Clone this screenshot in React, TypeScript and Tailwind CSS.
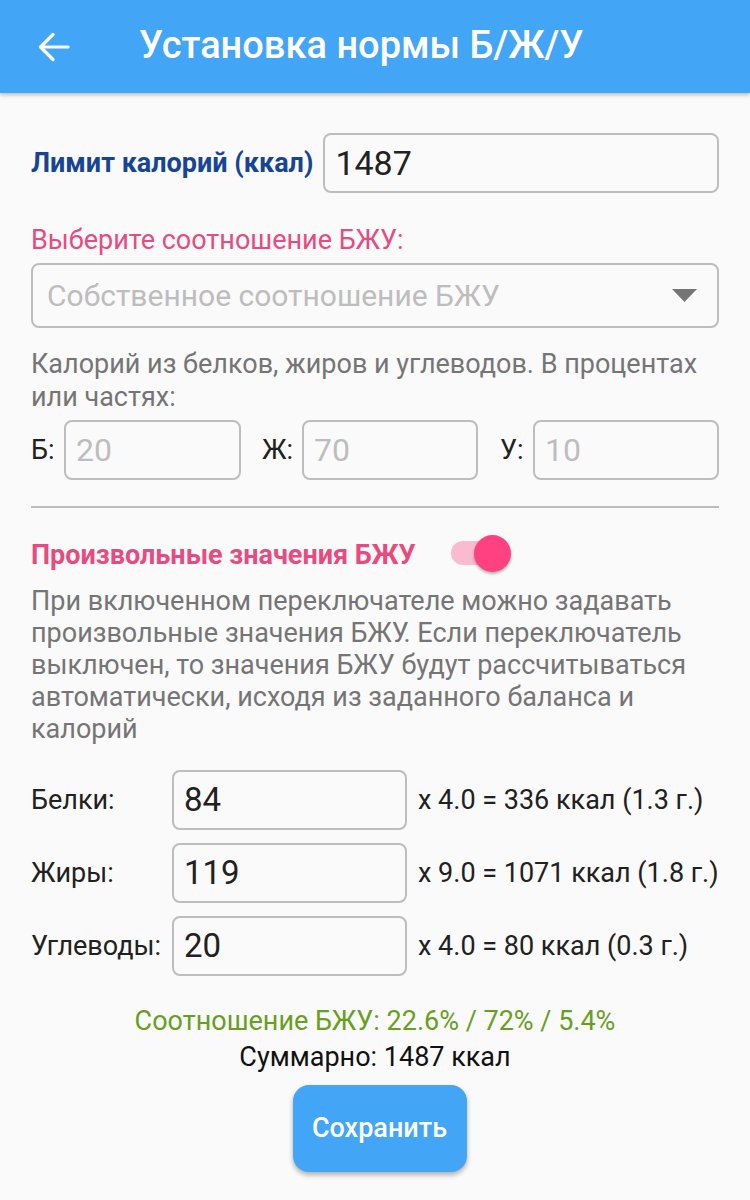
import React from "react";

function Box({ value, muted, className }: { value: string; muted?: boolean; className?: string }) {
  return (
    <div
      className={
        "flex items-center rounded-[8px] border-2 border-[#bdbdbd] bg-[#fafafa] pl-[10px] h-[60px] " +
        (muted ? "text-[#bdbdbd] text-[32px] " : "text-[#212121] text-[33px] ") +
        (className || "")
      }
    >
      {value}
    </div>
  );
}

export default function App() {
  return (
    <div className="min-h-[1200px] w-[750px] bg-[#fafafa] font-['Roboto',sans-serif] text-[#212121]">
      <header className="flex h-[93px] items-center bg-[#42a5f5] shadow-[0_2px_4px_rgba(0,0,0,0.25)]">
        <svg
          className="ml-[38px] h-[32px] w-[32px]"
          viewBox="0 0 32 32"
          fill="none"
          stroke="white"
          strokeWidth="3.2"
          strokeLinecap="round"
          strokeLinejoin="round"
        >
          <path d="M30 16H3M15 3.5L2.5 16L15 28.5" />
        </svg>
        <h1 className="ml-[69px] -mt-[3px] text-[38px] font-medium leading-none text-white">Установка нормы Б/Ж/У</h1>
      </header>

      <main className="px-[31px]">
        <div className="mt-[40px] flex items-center">
          <span className="text-[27px] font-bold text-[#174494] whitespace-nowrap">Лимит калорий (ккал)</span>
          <Box value="1487" className="ml-[10px] flex-1 !text-[34px]" />
        </div>

        <div className="mt-[33px] text-[27px] leading-[28px] text-[#e84b80]">Выберите соотношение БЖУ:</div>

        <div className="mt-[9px] flex h-[65px] items-center justify-between rounded-[8px] border-2 border-[#bdbdbd] pl-[14px] pr-[20px]">
          <span className="text-[30px] text-[#bdbdbd]">Собственное соотношение БЖУ</span>
          <svg width="25" height="13" viewBox="0 0 25 13">
            <path d="M0 0H25L12.5 13Z" fill="#757575" />
          </svg>
        </div>

        <p className="mt-[20px] text-[27px] leading-[33px] text-[#757575]">
          Калорий из белков, жиров и углеводов. В процентах или частях:
        </p>

        <div className="mt-[6px] flex items-center">
          <span className="w-[33px] text-[27px] text-[#212121]">Б:</span>
          <Box value="20" muted className="w-[177px]" />
          <span className="ml-[21px] w-[40px] text-[27px] text-[#212121]">Ж:</span>
          <Box value="70" muted className="w-[176px]" />
          <span className="ml-[22px] w-[33px] text-[27px] text-[#212121]">У:</span>
          <Box value="10" muted className="flex-1" />
        </div>

        <div className="mt-[26px] h-[2px] bg-[#bdbdbd]" />

        <div className="mt-[27px] flex h-[40px] items-center">
          <span className="text-[27px] font-bold text-[#e84b80]">Произвольные значения БЖУ</span>
          <div className="relative ml-[35px] h-[40px] w-[60px]">
            <div className="absolute left-0 top-[6px] h-[24px] w-[50px] rounded-full bg-[#f8bbd0]" />
            <div className="absolute left-[23px] top-[0px] h-[37px] w-[37px] rounded-full bg-[#ff4081] shadow-[0_2px_3px_rgba(0,0,0,0.3)]" />
          </div>
        </div>

        <p className="mt-[10px] text-[27px] leading-[32px] text-[#757575]">
          При включенном переключателе можно задавать произвольные значения БЖУ. Если переключатель выключен, то
          значения БЖУ будут рассчитываться автоматически, исходя из заданного баланса и калорий
        </p>

        <div className="mt-[25px] flex flex-col gap-[13px]">
          {[
            ["Белки:", "84", "x 4.0 = 336 ккал (1.3 г.)"],
            ["Жиры:", "119", "x 9.0 = 1071 ккал (1.8 г.)"],
            ["Углеводы:", "20", "x 4.0 = 80 ккал (0.3 г.)"],
          ].map(([l, v, t]) => (
            <div key={l} className="flex items-center">
              <span className="w-[141px] text-[27px] text-[#212121]">{l}</span>
              <Box value={v} className="w-[235px]" />
              <span className="ml-[11px] whitespace-nowrap text-[27px] text-[#212121]">{t}</span>
            </div>
          ))}
        </div>

        <div className="mt-[27px] text-center text-[27px] leading-[36px] text-[#689f1f]">
          Соотношение БЖУ: 22.6% / 72% / 5.4%
        </div>
        <div className="text-center text-[27px] leading-[36px] text-[#111]">Суммарно: 1487 ккал</div>

        <div className="mt-[10px] flex justify-center">
          <button className="ml-[9px] h-[87px] w-[174px] rounded-[16px] bg-[#42a5f5] text-[27px] font-medium text-white shadow-[0_3px_5px_rgba(0,0,0,0.3)]">
            Сохранить
          </button>
        </div>
      </main>
    </div>
  );
}
